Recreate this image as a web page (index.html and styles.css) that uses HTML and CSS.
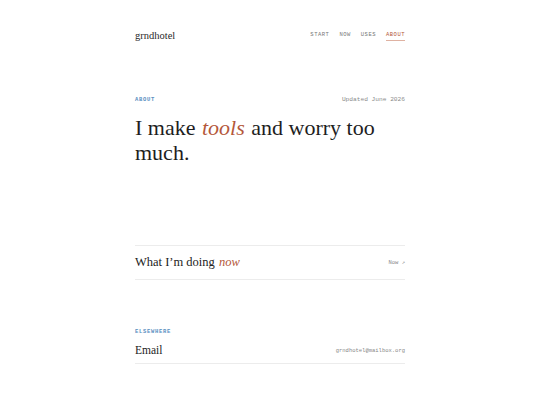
FILE: index.html
```html
<!DOCTYPE html>
<html>
<head>
<meta charset="utf-8">
<link rel="stylesheet" href="styles.css">
</head>
<body>
<div class="page">
  <header class="top">
    <div class="logo">grndhotel</div>
    <nav class="nav">
      <a>START</a>
      <a>NOW</a>
      <a>USES</a>
      <a class="active">ABOUT</a>
    </nav>
  </header>
  <section class="intro">
    <div class="meta">
      <span class="label">ABOUT</span>
      <span class="updated">Updated June 2026</span>
    </div>
    <h1 class="headline">I make <em>tools</em> and worry too much.</h1>
  </section>
  <section class="rows">
    <div class="row">
      <span class="row-title">What I’m doing <em>now</em></span>
      <span class="row-link">Now ↗</span>
    </div>
  </section>
  <section class="elsewhere">
    <div class="label">ELSEWHERE</div>
    <div class="row row-last">
      <span class="row-title">Email</span>
      <span class="row-mono">grndhotel@mailbox.org</span>
    </div>
  </section>
</div>
</body>
</html>
```
FILE: styles.css
```css
html, body { margin: 0; padding: 0; background: #fff; }
body { font-family: "Liberation Serif", serif; color: #222; }
.page { width: 270px; margin: 0 auto; padding-top: 27px; }
.top { display: flex; justify-content: space-between; align-items: center; height: 16px; }
.logo { font-size: 10.5px; color: #2a2a2a; }
.nav { display: flex; gap: 10px; font-family: "Liberation Mono", monospace; font-size: 5.5px; letter-spacing: 0.5px; color: #777; padding-top: 2px; }
.nav a { padding-bottom: 2px; border-bottom: 1px solid transparent; }
.nav .active { color: #b4583a; border-bottom-color: #dfb2a2; }
.intro { margin-top: 53px; }
.meta { display: flex; justify-content: space-between; align-items: center; }
.label { font-family: "Liberation Mono", monospace; font-size: 5.5px; letter-spacing: 0.7px; color: #5a8fbf; font-weight: bold; }
.updated { font-family: "Liberation Mono", monospace; font-size: 6.2px; color: #8a8a8a; }
.headline { font-weight: normal; font-size: 22px; line-height: 25px; margin: 12px 0 0; color: #1e1e1e; }
.headline em, .row-title em { color: #b4583a; padding: 0 1px; }
.rows { margin-top: 80px; border-top: 1px solid #ececec; }
.row { display: flex; justify-content: space-between; align-items: center; height: 33px; border-bottom: 1px solid #ececec; }
.row-title { font-size: 12.5px; color: #222; }
.row-link { font-family: "Liberation Mono", monospace; font-size: 5.5px; color: #888; }
.elsewhere { margin-top: 48px; }
.elsewhere .label { margin-bottom: 2px; }
.row-last { height: 26px; }
.row-last .row-title { font-size: 11.5px; }
.row-mono { font-family: "Liberation Mono", monospace; font-size: 5.5px; color: #888; }
```
